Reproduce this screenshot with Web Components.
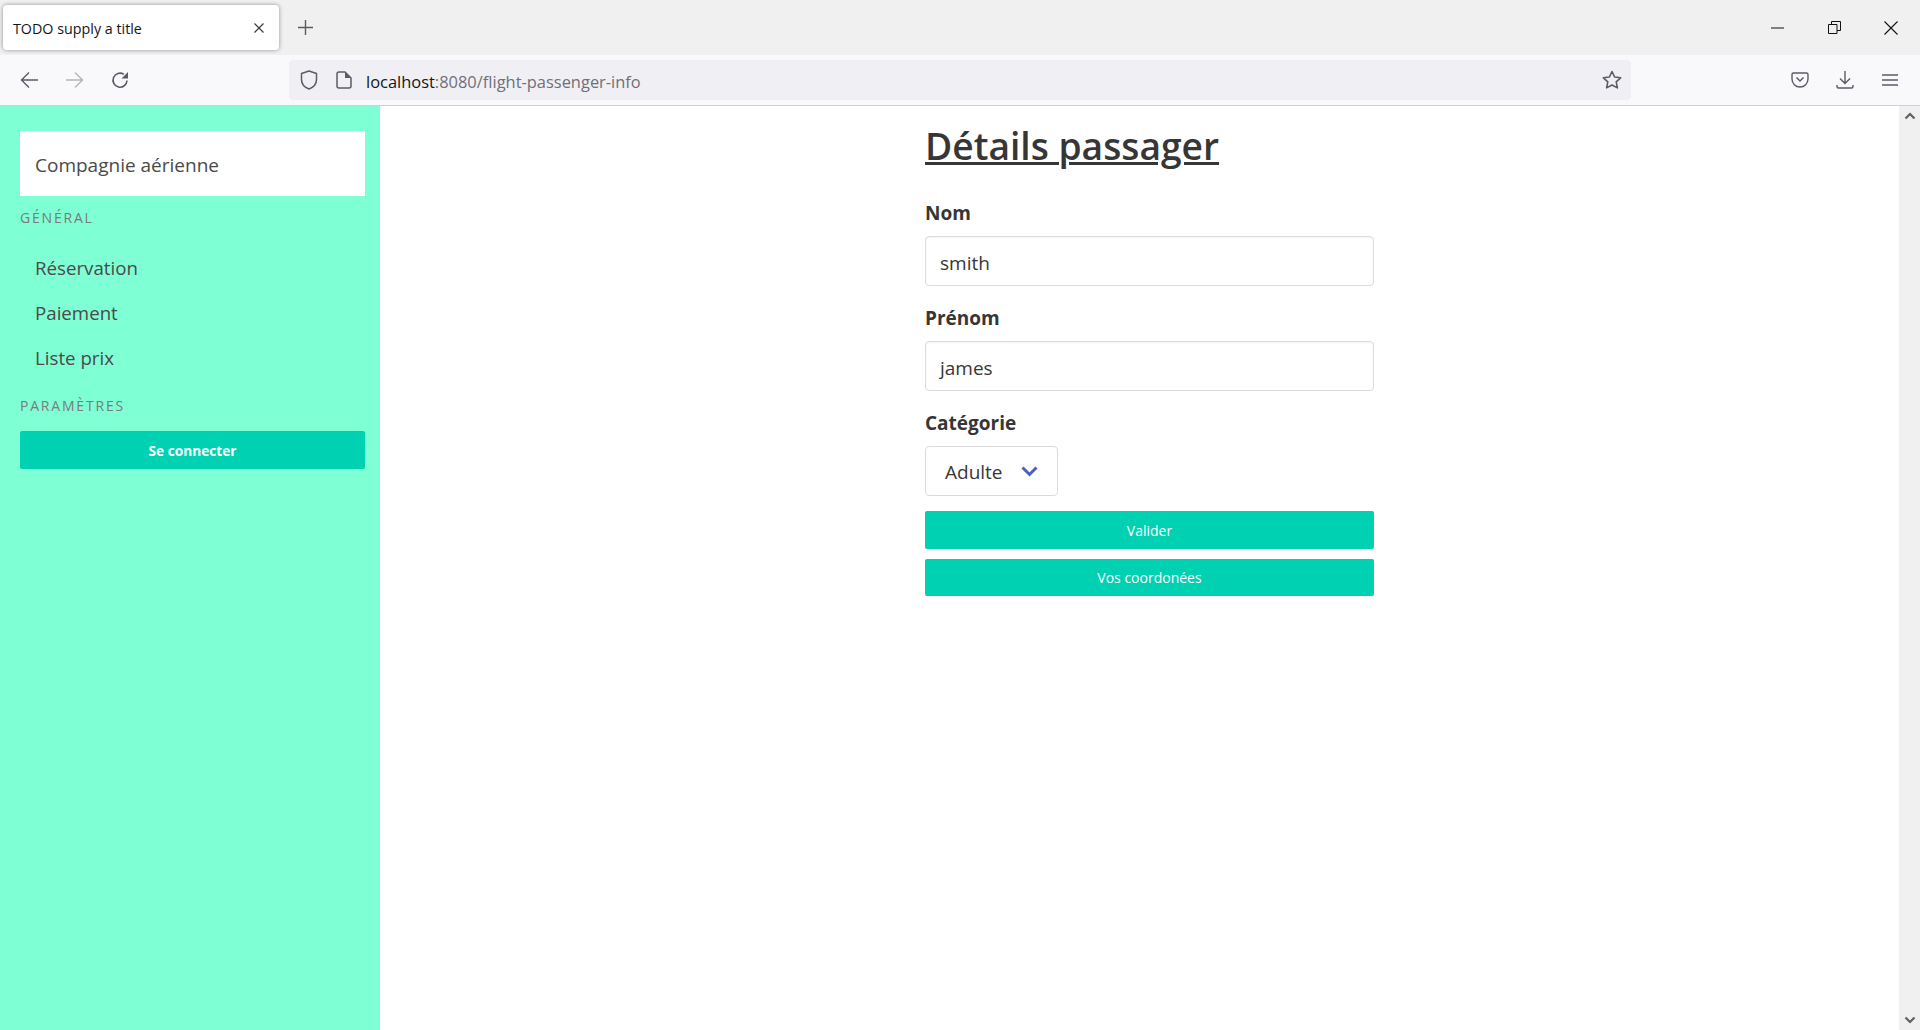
<!DOCTYPE html>
<html lang="fr">
<head>
<meta charset="utf-8">
<title>TODO supply a title</title>
<style>
  html, body { margin: 0; height: 100%; overflow: hidden; background: #fff; }
  body { font-family: "Open Sans", "Noto Sans", sans-serif; color: #363636; }
</style>
</head>
<body>
<app-shell>
  <browser-frame slot="top" url-host="localhost" url-path=":8080/flight-passenger-info" tab-title="TODO supply a title"></browser-frame>
  <side-menu slot="side" brand="Compagnie aérienne">
    <menu-label style="margin-bottom:7px">GÉNÉRAL</menu-label>
    <menu-link>Réservation</menu-link>
    <menu-link>Paiement</menu-link>
    <menu-link>Liste prix</menu-link>
    <menu-label style="margin-top:4px;margin-bottom:5px">PARAMÈTRES</menu-label>
    <action-button strong>Se connecter</action-button>
  </side-menu>
  <passenger-form slot="main"></passenger-form>
</app-shell>

<script>
class AppShell extends HTMLElement {
    connectedCallback() {
        this.attachShadow({mode: 'open'});
        this.shadowRoot.innerHTML = `
        <style>
            :host { display: flex; flex-direction: column; height: 1030px; }
            .body { flex: 1; display: flex; min-height: 0; }
            .main { flex: 1; min-width: 0; }
            .scrollbar {
                width: 21px;
                background: #f0f0f0;
                display: flex;
                flex-direction: column;
                justify-content: space-between;
                align-items: center;
                padding: 6px 0;
                box-sizing: border-box;
            }
            svg { display: block; }
        </style>
        <slot name="top"></slot>
        <div class="body">
            <slot name="side"></slot>
            <div class="main"><slot name="main"></slot></div>
            <div class="scrollbar">
                <svg width="12" height="8" viewBox="0 0 12 8"><path d="M1.5 6.5 6 2l4.5 4.5" fill="none" stroke="#606060" stroke-width="2.2"/></svg>
                <svg width="12" height="8" viewBox="0 0 12 8"><path d="M1.5 1.5 6 6l4.5-4.5" fill="none" stroke="#606060" stroke-width="2.2"/></svg>
            </div>
        </div>
        `
    }
}

class BrowserFrame extends HTMLElement {
    connectedCallback() {
        const host = this.getAttribute('url-host')
        const path = this.getAttribute('url-path')
        const title = this.getAttribute('tab-title')
        this.attachShadow({mode: 'open'});
        this.shadowRoot.innerHTML = `
        <style>
            :host { display: block; font-family: "Open Sans", "Noto Sans", sans-serif; }
            svg { display: block; flex: none; }
            .tabs {
                height: 55px;
                background: #f0f0f0;
                display: flex;
                align-items: center;
            }
            .tab {
                margin-left: 3px;
                width: 276px;
                height: 45px;
                background: #fff;
                border-radius: 4px;
                box-shadow: 0 0 4px rgba(0,0,0,0.4);
                display: flex;
                align-items: center;
                justify-content: space-between;
                padding: 0 15px 0 10px;
                box-sizing: border-box;
                font-size: 14.3px;
                color: #15141a;
            }
            .tab span { position: relative; top: 1px; }
            .plus { margin-left: 19px; }
            .win { margin-left: auto; display: flex; align-items: center; margin-right: 22px; }
            .win svg:nth-child(1) { margin-right: 44px; }
            .win svg:nth-child(2) { margin-right: 43px; }
            .toolbar {
                height: 51px;
                background: #f9f9fb;
                border-bottom: 1px solid #cfcfd8;
                box-sizing: border-box;
                display: flex;
                align-items: center;
            }
            .nav { display: flex; align-items: center; gap: 27px; padding-left: 20px; width: 289px; box-sizing: border-box; }
            .nav svg:first-child { margin-right: 1px; }
            .url {
                width: 1342px;
                height: 40px;
                background: #f0f0f4;
                border-radius: 4px;
                display: flex;
                align-items: center;
                padding: 0 9px 0 11px;
                box-sizing: border-box;
                font-size: 16.45px;
                color: #6f6f78;
            }
            .url .doc { margin-left: 18px; margin-right: 14px; }
            .url span { position: relative; top: 1px; }
            .url b { font-weight: 400; color: #15141a; }
            .url .star { margin-left: auto; }
            .tools { display: flex; align-items: center; gap: 27px; margin-left: 160px; }
            .tools svg:nth-child(2) { margin-right: 1px; }
        </style>
        <div class="tabs">
            <div class="tab">
                <span>${title}</span>
                <svg width="10" height="10" viewBox="0 0 10 10"><path d="M.5.5l9 9m0-9l-9 9" stroke="#3a3a40" stroke-width="1.2" fill="none"/></svg>
            </div>
            <svg class="plus" width="15" height="15" viewBox="0 0 15 15"><path d="M7.5 0v15M0 7.5h15" stroke="#5b5b66" stroke-width="1.4" fill="none"/></svg>
            <div class="win">
                <svg width="13" height="2" viewBox="0 0 13 2"><path d="M0 1h13" stroke="#111" stroke-width="1"/></svg>
                <svg width="13" height="13" viewBox="0 0 13 13"><path d="M.5 3.5h8.500v9H.5zM3.500 3.500V.5h9v9H9" fill="none" stroke="#111"/></svg>
                <svg width="14" height="14" viewBox="0 0 14 14"><path d="M.5.5l13 13m0-13l-13 13" fill="none" stroke="#111" stroke-width="1.1"/></svg>
            </div>
        </div>
        <div class="toolbar">
            <div class="nav">
                <svg width="18" height="18" viewBox="0 0 18 18"><path d="M18 9H1.500M9 1.500 1.500 9 9 16.500" fill="none" stroke="#5b5b66" stroke-width="1.4"/></svg>
                <svg width="18" height="18" viewBox="0 0 18 18"><path d="M0 9h16.500M9 1.500 16.500 9 9 16.500" fill="none" stroke="#b5b5bb" stroke-width="1.4"/></svg>
                <svg width="18" height="18" viewBox="0 0 18 18"><path d="M16 9.500A7 7 0 1 1 12.800 3.300" fill="none" stroke="#5b5b66" stroke-width="1.600"/><path d="M17 1v6.500h-6.500z" fill="#5b5b66"/></svg>
            </div>
            <div class="url">
                <svg width="18" height="20" viewBox="0 0 18 20"><path d="M9 1 1.500 3.500v6C1.500 14 5 17.500 9 19c4-1.500 7.500-5 7.500-9.500v-6z" fill="none" stroke="#5b5b66" stroke-width="1.5" stroke-linejoin="round"/></svg>
                <svg class="doc" width="16" height="18" viewBox="0 0 16 18"><path d="M3 1h6l6 6v8a2 2 0 0 1-2 2H3a2 2 0 0 1-2-2V3a2 2 0 0 1 2-2z" fill="none" stroke="#5b5b66" stroke-width="1.500"/><path d="M9 1l6 6H9z" fill="#5b5b66"/></svg>
                <span><b>${host}</b>${path}</span>
                <svg class="star" width="20" height="20" viewBox="0 0 20 20"><path d="M10 1.500l2.600 5.500 6 .8-4.400 4.100 1.200 6L10 15l-5.400 2.900 1.200-6L1.400 7.800l6-.8z" fill="none" stroke="#5b5b66" stroke-width="1.600" stroke-linejoin="round"/></svg>
            </div>
            <div class="tools">
                <svg width="18" height="16" viewBox="0 0 18 16"><path d="M2.500 1h13A1.500 1.500 0 0 1 17 2.500V7a8 8 0 0 1-16 0V2.500A1.500 1.500 0 0 1 2.500 1z" fill="none" stroke="#5b5b66" stroke-width="1.4"/><path d="M5.500 5.500 9 9l3.500-3.500" fill="none" stroke="#5b5b66" stroke-width="1.500"/></svg>
                <svg width="18" height="20" viewBox="0 0 18 20"><path d="M9 1v12M4 8.500 9 13.500l5-5M1 15v1.500A1.500 1.500 0 0 0 2.500 18h13a1.500 1.500 0 0 0 1.500-1.500V15" fill="none" stroke="#5b5b66" stroke-width="1.4"/></svg>
                <svg width="16" height="14" viewBox="0 0 16 14"><path d="M0 2h16M0 7h16M0 12h16" fill="none" stroke="#5b5b66" stroke-width="1.4"/></svg>
            </div>
        </div>
        `
    }
}

class SideMenu extends HTMLElement {
    connectedCallback() {
        const brand = this.getAttribute('brand')
        this.attachShadow({mode: 'open'});
        this.shadowRoot.innerHTML = `
        <style>
            :host {
                display: block;
                width: 380px;
                flex: none;
                background: #7fffd4;
                padding: 25px 15px 0 20px;
                box-sizing: border-box;
            }
            .brand {
                background: #fff;
                height: 65px;
                display: flex;
                align-items: center;
                padding: 3px 0 0 15px;
                box-sizing: border-box;
                font-size: 19px;
                color: #4a4a4a;
            }
        </style>
        <div class="brand">${brand}</div>
        <slot></slot>
        `
    }
}

class MenuLabel extends HTMLElement {
    connectedCallback() {
        this.attachShadow({mode: 'open'});
        this.shadowRoot.innerHTML = `
        <style>
            :host {
                display: block;
                height: 42px;
                line-height: 44px;
                font-size: 14px;
                letter-spacing: 1.8px;
                color: #7a7a7a;
            }
        </style>
        <slot></slot>
        `
    }
}

class MenuLink extends HTMLElement {
    connectedCallback() {
        this.attachShadow({mode: 'open'});
        this.shadowRoot.innerHTML = `
        <style>
            :host {
                display: block;
                height: 45px;
                line-height: 45px;
                padding-left: 15px;
                font-size: 18.7px;
                color: #4a4a4a;
            }
        </style>
        <slot></slot>
        `
    }
}

class ActionButton extends HTMLElement {
    connectedCallback() {
        const strong = this.hasAttribute('strong')
        this.attachShadow({mode: 'open'});
        this.shadowRoot.innerHTML = `
        <style>
            :host {
                display: block;
                height: 38px;
                line-height: 40px;
                background: #00d1b2;
                border-radius: 2px;
                color: #fff;
                text-align: center;
                font-size: ${strong ? 13.7 : 14}px;
                font-weight: ${strong ? 700 : 400};
            }
        </style>
        <slot></slot>
        `
    }
}

class FormField extends HTMLElement {
    connectedCallback() {
        const label = this.getAttribute('label')
        this.attachShadow({mode: 'open'});
        this.shadowRoot.innerHTML = `
        <style>
            :host { display: block; margin-bottom: 15px; }
            label {
                display: block;
                font-size: 19px;
                font-weight: 700;
                line-height: 34px;
                margin-bottom: 6px;
                color: #363636;
            }
        </style>
        <label>${label}</label>
        <slot></slot>
        `
    }
}

class TextBox extends HTMLElement {
    connectedCallback() {
        this.attachShadow({mode: 'open'});
        this.shadowRoot.innerHTML = `
        <style>
            :host {
                display: block;
                height: 50px;
                line-height: 50px;
                border: 1px solid #dbdbdb;
                border-radius: 4px;
                padding: 1px 0 0 14px;
                box-sizing: border-box;
                font-size: 19px;
                color: #363636;
                box-shadow: inset 0 1px 2px rgba(10,10,10,0.05);
            }
        </style>
        <slot></slot>
        `
    }
}

class SelectBox extends HTMLElement {
    connectedCallback() {
        this.attachShadow({mode: 'open'});
        this.shadowRoot.innerHTML = `
        <style>
            :host {
                display: flex;
                align-items: center;
                justify-content: space-between;
                width: 133px;
                height: 50px;
                border: 1px solid #dbdbdb;
                border-radius: 4px;
                padding: 2px 19px 0 19px;
                box-sizing: border-box;
                font-size: 19px;
                color: #363636;
            }
            svg { display: block; margin-top: -2px; }
        </style>
        <slot></slot>
        <svg width="17" height="11" viewBox="0 0 17 11"><path d="M1.5 1.5 8.5 8.5l7-7" fill="none" stroke="#485fc7" stroke-width="3"/></svg>
        `
    }
}

class PassengerForm extends HTMLElement {
    connectedCallback() {
        this.attachShadow({mode: 'open'});
        this.shadowRoot.innerHTML = `
        <style>
            :host { display: block; padding: 16px 0 0 545px; }
            .column { width: 449px; }
            h1 {
                margin: 0 0 26px;
                font-size: 37.2px;
                font-weight: 600;
                line-height: 48px;
                text-decoration: underline;
                text-decoration-thickness: 3px;
                color: #363636;
            }
            .buttons { display: flex; flex-direction: column; gap: 10px; }
        </style>
        <div class="column">
            <h1>Détails passager</h1>
            <form-field label="Nom"><text-box>smith</text-box></form-field>
            <form-field label="Prénom"><text-box>james</text-box></form-field>
            <form-field label="Catégorie"><select-box>Adulte</select-box></form-field>
            <div class="buttons">
                <action-button>Valider</action-button>
                <action-button style="height:37px;line-height:37px">Vos coordonées</action-button>
            </div>
        </div>
        `
    }
}

window.customElements.define("app-shell", AppShell)
window.customElements.define("browser-frame", BrowserFrame)
window.customElements.define("side-menu", SideMenu)
window.customElements.define("menu-label", MenuLabel)
window.customElements.define("menu-link", MenuLink)
window.customElements.define("action-button", ActionButton)
window.customElements.define("form-field", FormField)
window.customElements.define("text-box", TextBox)
window.customElements.define("select-box", SelectBox)
window.customElements.define("passenger-form", PassengerForm)
</script>
</body>
</html>
